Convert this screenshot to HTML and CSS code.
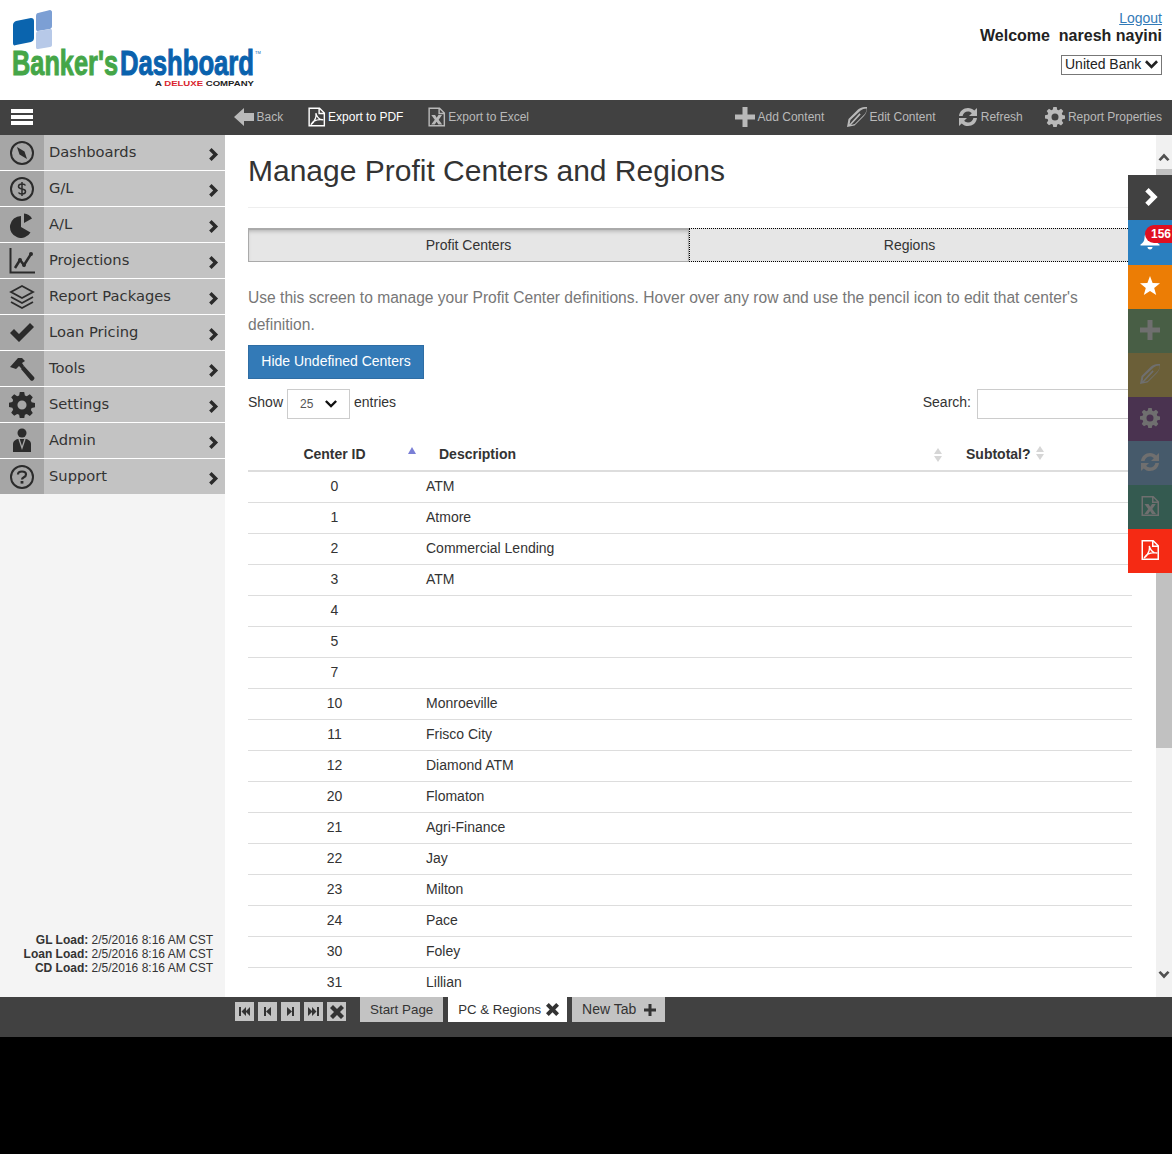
FILE: index.html
```html
<!DOCTYPE html>
<html lang="en">
<head>
    <meta charset="UTF-8">
    <meta name="viewport" content="width=device-width, initial-scale=1.0">
    <title>Manage Profit Centers and Regions</title>
    <link rel="stylesheet" href="styles.css">
</head>
<body>
    <svg class="icon-defs" width="0" height="0">
        <symbol id="i-plus" viewBox="0 0 20 20"><path d="M7.500 0h5v7.500H20v5h-7.500V20h-5v-7.500H0v-5h7.500z"/></symbol>
        <symbol id="i-pencil" viewBox="0 0 20 20"><path fill-rule="evenodd" d="M0 20l1.500-8L11 2.500C13.500.5 16.500-.2 20 0c.3 3.500-.7 6.500-3 9L7.500 18.500zM3.400 13l-.8 4.200 1.100-1.100 8.800-9.800 1.200 1.200-8.800 9.600-.8 1 3.700-1 9.800-9.800c1.300-1.600 2-3.300 2.100-5.800-2.500 0-4.500.8-6.100 2z"/></symbol>
        <symbol id="i-gear" viewBox="0 0 20 20"><path fill-rule="evenodd" d="M8.300 0h3.400l.5 2.700 1.500.6 2.300-1.500 2.300 2.300-1.500 2.300.6 1.500 2.700.5v3.400l-2.700.5-.6 1.500 1.500 2.300-2.300 2.300-2.300-1.500-1.500.6-.5 2.700H8.300l-.5-2.700-1.500-.6L4 18.200 1.700 15.900l1.500-2.300-.6-1.500-2.700-.5V8.200l2.700-.5.6-1.500L1.700 4 4 1.700l2.300 1.500 1.500-.6zM10 6.500a3.500 3.500 0 1 0 0 7 3.500 3.500 0 0 0 0-7z"/></symbol>
        <symbol id="i-refresh" viewBox="0 0 20 20"><path d="M1 9C1.500 4 5.500 1 10 1c2.500 0 4.700 1 6.300 2.600L19 1v8h-8l2.800-2.800C12.800 5.200 11.500 4.500 10 4.500c-2.800 0-4.900 1.900-5.400 4.500z"/><path transform="rotate(180 10 10)" d="M1 9C1.500 4 5.500 1 10 1c2.500 0 4.700 1 6.300 2.600L19 1v8h-8l2.800-2.800C12.800 5.200 11.500 4.500 10 4.500c-2.800 0-4.900 1.900-5.400 4.500z"/></symbol>
        <symbol id="i-excel" viewBox="0 0 20 20"><path fill-rule="evenodd" d="M1.500 0h12L19 5.500V20H1.500zM3 1.500v17h14.500V7H12V1.500zM13.500 2v3.500H17zM4.500 8h4l1.700 2.800L12 8h3.800l-3.500 5 3.700 5h-4l-1.900-3-1.900 3H4.400l3.800-5z"/></symbol>
        <symbol id="i-pdf" viewBox="0 0 20 20"><path fill-rule="evenodd" d="M1.500 0h12L19 5.500V20H1.500zM3 1.500v17h14.500V7H12V1.500zM13.500 2v3.500H17z"/><path d="M4 18c2.500-1.500 4-4 5-7 .6-1.800.6-3.300.3-5 .8 2.800 2.800 5.800 5 6.600l3 .4c-3.200-.6-7.300 0-10 1.300C6 15 5 16.800 4 18z" fill="none" stroke="currentColor" stroke-width="1.300"/></symbol>
        <symbol id="i-chevron" viewBox="0 0 12 16"><path d="M3 0l8 8-8 8-3-3 5-5-5-5z"/></symbol>
        <symbol id="i-down" viewBox="0 0 14 9"><path d="M0 2l2-2 5 5 5-5 2 2-7 7z"/></symbol>
        <symbol id="i-close" viewBox="0 0 14 14"><path d="M3 0l4 4 4-4 3 3-4 4 4 4-3 3-4-4-4 4-3-3 4-4-4-4z"/></symbol>
    </svg>

    <header class="top-header">
        <svg class="logo" width="262" height="90" viewBox="0 0 262 90">
            <path d="M13 25c0-2 1-3 3-4l15-3c2 0 3 1 3 3v17c0 2-1 3-3 4l-15 3c-2 1-3 0-3-2z" fill="#0a64ae"/>
            <path d="M36 16c0-2 1-3 2-3l12-3c1 0 2 1 2 2v14c0 2-1 2-2 3l-12 2c-1 0-2 0-2-2z" fill="#7c9fd4"/>
            <path d="M36 34c0-2 1-3 2-3l12-2c1 0 2 0 2 2v14c0 1-1 2-2 2l-12 2c-1 0-2 0-2-2z" fill="#b7c9e8"/>
            <text class="logo-word logo-green" x="12" y="75" textLength="106" lengthAdjust="spacingAndGlyphs">Banker's</text>
            <text class="logo-word logo-blue" x="120" y="75" textLength="134" lengthAdjust="spacingAndGlyphs">Dashboard</text>
            <text class="logo-tm" x="255" y="54">TM</text>
            <text class="logo-sub" x="155" y="86" textLength="99" lengthAdjust="spacingAndGlyphs">A <tspan class="logo-deluxe">DELUXE</tspan> COMPANY</text>
        </svg>
        <div class="user-box">
            <a href="#" class="logout">Logout</a>
            <div class="welcome">Welcome&nbsp; naresh nayini</div>
            <div class="bank-select">United Bank <svg width="13" height="9"><use href="#i-down"/></svg></div>
        </div>
    </header>

    <nav class="toolbar">
        <div class="hamburger"><span></span><span></span><span></span></div>
        <div class="tool-group">
            <a class="tool"><svg width="20" height="18" viewBox="0 0 20 18"><path d="M0 9l10-9v5h10v8H10v5z"/></svg>Back</a>
            <a class="tool tool-active"><svg width="19" height="20"><use href="#i-pdf"/></svg>Export to PDF</a>
            <a class="tool"><svg width="19" height="20"><use href="#i-excel"/></svg>Export to Excel</a>
        </div>
        <div class="tool-group tool-group-right">
            <a class="tool"><svg width="20" height="20"><use href="#i-plus"/></svg>Add Content</a>
            <a class="tool"><svg width="20" height="20"><use href="#i-pencil"/></svg>Edit Content</a>
            <a class="tool"><svg width="20" height="20"><use href="#i-refresh"/></svg>Refresh</a>
            <a class="tool"><svg width="20" height="20"><use href="#i-gear"/></svg>Report Properties</a>
        </div>
    </nav>

    <div class="app-body">
        <aside class="sidebar">
            <ul class="side-menu">
                <li><span class="side-icon"><svg width="26" height="26" viewBox="0 0 26 26"><circle cx="13" cy="13" r="11" fill="none" stroke="currentColor" stroke-width="2"/><path d="M8 7l7.500 4.500L18 19l-7.500-4.500z"/></svg></span>Dashboards<svg class="side-arrow" width="10" height="13"><use href="#i-chevron"/></svg></li>
                <li><span class="side-icon"><svg width="26" height="26" viewBox="0 0 26 26"><circle cx="13" cy="13" r="11" fill="none" stroke="currentColor" stroke-width="2"/><path d="M16.500 9.500c-.5-1-1.500-1.500-3.500-1.500s-3.500.8-3.500 2.500 1.500 2.200 3.500 2.500 3.500.8 3.500 2.500S15 18 13 18s-3-.5-3.500-1.500M13 6v14" fill="none" stroke="currentColor" stroke-width="1.500"/></svg></span>G/L<svg class="side-arrow" width="10" height="13"><use href="#i-chevron"/></svg></li>
                <li><span class="side-icon"><svg width="26" height="26" viewBox="0 0 26 26"><path d="M12 4v11l9.500 5.500A11 11 0 1 1 12 4z"/><path d="M15 1.500V11l8-4.500A10 10 0 0 0 15 1.500z"/></svg></span>A/L<svg class="side-arrow" width="10" height="13"><use href="#i-chevron"/></svg></li>
                <li><span class="side-icon"><svg width="26" height="26" viewBox="0 0 26 26"><path d="M1.500 0v24.500H26" fill="none" stroke="currentColor" stroke-width="2"/><path d="M6 20l5-8 4 5 7-11" fill="none" stroke="currentColor" stroke-width="2.500"/><circle cx="11" cy="12" r="2"/><circle cx="15" cy="17" r="2"/><circle cx="22" cy="6" r="2"/></svg></span>Projections<svg class="side-arrow" width="10" height="13"><use href="#i-chevron"/></svg></li>
                <li><span class="side-icon"><svg width="26" height="26" viewBox="0 0 26 26"><path d="M13 2l11 6-11 6L2 8z" fill="none" stroke="currentColor" stroke-width="1.800"/><path d="M2 13l11 6 11-6M2 18l11 6 11-6" fill="none" stroke="currentColor" stroke-width="1.800"/></svg></span>Report Packages<svg class="side-arrow" width="10" height="13"><use href="#i-chevron"/></svg></li>
                <li><span class="side-icon"><svg width="26" height="26" viewBox="0 0 26 26"><path d="M1 13l4-4 5 5L21 3l4 4-15 15z"/></svg></span>Loan Pricing<svg class="side-arrow" width="10" height="13"><use href="#i-chevron"/></svg></li>
                <li><span class="side-icon"><svg width="26" height="26" viewBox="0 0 26 26"><path d="M1 11L9 2h4l3 3-3 2 2 3-2 3-3-3-3 3z"/><path d="M12 13l3-3 10 11c.8 1 .5 2-.3 2.700l-.7.7c-.8.600-1.800.500-2.500-.2z"/></svg></span>Tools<svg class="side-arrow" width="10" height="13"><use href="#i-chevron"/></svg></li>
                <li><span class="side-icon"><svg width="26" height="26"><use href="#i-gear"/></svg></span>Settings<svg class="side-arrow" width="10" height="13"><use href="#i-chevron"/></svg></li>
                <li><span class="side-icon"><svg width="26" height="26" viewBox="0 0 26 26"><circle cx="13" cy="5" r="4.500"/><path d="M4 24v-8c0-3 3-5 6-5h6c3 0 6 2 6 5v8z"/><path class="admin-tie" d="M10 11l3 9 3-9"/></svg></span>Admin<svg class="side-arrow" width="10" height="13"><use href="#i-chevron"/></svg></li>
                <li><span class="side-icon"><svg width="26" height="26" viewBox="0 0 26 26"><circle cx="13" cy="13" r="11" fill="none" stroke="currentColor" stroke-width="2"/><path d="M9 10.500c0-2 2-3 4-3s4 1 4 3c0 3-4 2.500-4 5" fill="none" stroke="currentColor" stroke-width="2.200"/><rect x="11.600" y="17" width="2.800" height="2.600"/></svg></span>Support<svg class="side-arrow" width="10" height="13"><use href="#i-chevron"/></svg></li>
            </ul>
            <div class="load-info">
                <div><b>GL Load:</b> 2/5/2016 8:16 AM CST</div>
                <div><b>Loan Load:</b> 2/5/2016 8:16 AM CST</div>
                <div><b>CD Load:</b> 2/5/2016 8:16 AM CST</div>
            </div>
        </aside>

        <main class="content">
            <h1>Manage Profit Centers and Regions</h1>
            <div class="tabs">
                <div class="tab tab-current">Profit Centers</div>
                <div class="tab tab-focus">Regions</div>
            </div>
            <p class="intro">Use this screen to manage your Profit Center definitions. Hover over any row and use the pencil icon to edit that center's definition.</p>
            <button class="btn-primary">Hide Undefined Centers</button>
            <div class="table-controls">
                <div class="length-box">Show <span class="length-select">25 <svg width="12" height="8"><use href="#i-down"/></svg></span> entries</div>
                <div class="search-box">Search: <span class="search-input"></span></div>
            </div>
            <table class="centers">
                <thead>
                    <tr>
                        <th class="col-id">Center ID<span class="sort sort-up"></span></th>
                        <th class="col-desc">Description<span class="sort sort-both"></span></th>
                        <th class="col-sub"><span class="sub-label">Subtotal?<span class="sort sort-both"></span></span></th>
                    </tr>
                </thead>
                <tbody>
                    <tr><td class="col-id">0</td><td>ATM</td><td></td></tr>
                    <tr><td class="col-id">1</td><td>Atmore</td><td></td></tr>
                    <tr><td class="col-id">2</td><td>Commercial Lending</td><td></td></tr>
                    <tr><td class="col-id">3</td><td>ATM</td><td></td></tr>
                    <tr><td class="col-id">4</td><td></td><td></td></tr>
                    <tr><td class="col-id">5</td><td></td><td></td></tr>
                    <tr><td class="col-id">7</td><td></td><td></td></tr>
                    <tr><td class="col-id">10</td><td>Monroeville</td><td></td></tr>
                    <tr><td class="col-id">11</td><td>Frisco City</td><td></td></tr>
                    <tr><td class="col-id">12</td><td>Diamond ATM</td><td></td></tr>
                    <tr><td class="col-id">20</td><td>Flomaton</td><td></td></tr>
                    <tr><td class="col-id">21</td><td>Agri-Finance</td><td></td></tr>
                    <tr><td class="col-id">22</td><td>Jay</td><td></td></tr>
                    <tr><td class="col-id">23</td><td>Milton</td><td></td></tr>
                    <tr><td class="col-id">24</td><td>Pace</td><td></td></tr>
                    <tr><td class="col-id">30</td><td>Foley</td><td></td></tr>
                    <tr><td class="col-id">31</td><td>Lillian</td><td></td></tr>
                </tbody>
            </table>
        </main>

        <div class="scrollbar">
            <svg class="scroll-btn" width="16" height="34" viewBox="0 0 16 34"><path d="M2.500 24.500L8 18.500l5.500 6-2 1.500L8 22.500 4.500 26z"/></svg>
            <div class="scroll-thumb"></div>
            <svg class="scroll-btn scroll-btn-down" width="16" height="34" viewBox="0 0 16 34"><path d="M2.500 9.500L8 15.500l5.500-6-2-1.500L8 11.500 4.500 8z"/></svg>
        </div>

        <div class="quick-panel">
            <div class="quick quick-toggle"><svg width="14" height="18"><use href="#i-chevron"/></svg></div>
            <div class="quick quick-bell">
                <svg width="20" height="20" viewBox="0 0 20 20"><path d="M10 2c3.500 0 5.500 2.500 5.500 6 0 3 1.500 5 4 6.500v1H.5v-1c2.500-1.500 4-3.500 4-6.500 0-3.500 2-6 5.500-6z"/><path d="M7.500 17h5c0 1.500-1 2.500-2.500 2.500S7.500 18.500 7.500 17z"/></svg>
                <span class="bell-badge">156</span>
            </div>
            <div class="quick quick-star"><svg width="20" height="20" viewBox="0 0 20 20"><path d="M10 0l2.600 7 7.400.3-5.800 4.600 2 7.100-6.200-4-6.200 4 2-7.100L0 7.300 7.400 7z"/></svg></div>
            <div class="quick quick-add"><svg width="20" height="20"><use href="#i-plus"/></svg></div>
            <div class="quick quick-edit"><svg width="20" height="20"><use href="#i-pencil"/></svg></div>
            <div class="quick quick-gear"><svg width="20" height="20"><use href="#i-gear"/></svg></div>
            <div class="quick quick-refresh"><svg width="20" height="20"><use href="#i-refresh"/></svg></div>
            <div class="quick quick-excel"><svg width="20" height="20"><use href="#i-excel"/></svg></div>
            <div class="quick quick-pdf"><svg width="20" height="20"><use href="#i-pdf"/></svg></div>
        </div>
    </div>

    <footer class="tab-bar">
        <div class="pager">
            <span class="pager-btn"><svg width="11" height="9" viewBox="0 0 11 9"><path d="M0 0h2v9H0zM7 0v9L2.500 4.500zM11 0v9L6.500 4.500z"/></svg></span>
            <span class="pager-btn"><svg width="7" height="9" viewBox="0 0 7 9"><path d="M0 0h2v9H0zM7 0v9L2 4.500z"/></svg></span>
            <span class="pager-btn"><svg width="7" height="9" viewBox="0 0 7 9"><path d="M7 0H5v9h2zM0 0v9l5-4.500z"/></svg></span>
            <span class="pager-btn"><svg width="11" height="9" viewBox="0 0 11 9"><path d="M11 0H9v9h2zM4 0v9l4.500-4.500zM0 0v9l4.500-4.500z"/></svg></span>
            <span class="pager-btn"><svg width="14" height="14"><use href="#i-close"/></svg></span>
        </div>
        <div class="page-tab">Start Page</div>
        <div class="page-tab page-tab-current">PC &amp; Regions <svg width="13" height="13"><use href="#i-close"/></svg></div>
        <div class="page-tab page-tab-new">New Tab <svg width="12" height="12"><use href="#i-plus"/></svg></div>
    </footer>
    <div class="page-end"></div>
</body>
</html>
```

FILE: styles.css
```css
* {
    box-sizing: border-box;
}

body {
    font-family: 'Liberation Sans', Arial, sans-serif;
    font-size: 14px;
    color: #333;
    margin: 0;
    padding: 0;
    background-color: #000;
    height: 1154px;
    overflow: hidden;
    display: flex;
    flex-direction: column;
}

svg {
    fill: currentColor;
    flex-shrink: 0;
}

.icon-defs {
    position: absolute;
}

/* header */
.top-header {
    height: 100px;
    background-color: #fff;
    display: flex;
    justify-content: space-between;
    flex-shrink: 0;
}

.logo {
    overflow: visible;
}

.logo-word {
    font-size: 35px;
    font-weight: 700;
    stroke-width: 1px;
}

.logo-green {
    fill: #45a648;
    stroke: #45a648;
}

.logo-blue {
    fill: #0a62ad;
    stroke: #0a62ad;
}

.logo-tm {
    font-size: 4px;
    fill: #0a62ad;
}

.logo-sub {
    font-size: 8px;
    font-weight: 700;
    fill: #222;
}

.logo-deluxe {
    fill: #d9232e;
}

.user-box {
    padding: 10px 10px 0 0;
    display: flex;
    flex-direction: column;
    align-items: flex-end;
}

.logout {
    color: #337ab7;
    text-decoration: underline;
    font-size: 14px;
    line-height: 16px;
}

.welcome {
    font-size: 16px;
    font-weight: 700;
    line-height: 18px;
    margin-top: 1px;
    color: #222;
}

.bank-select {
    width: 101px;
    height: 20px;
    margin-top: 10px;
    border: 1px solid #777;
    padding: 0 3px 1px 3px;
    font-size: 14px;
    line-height: 17px;
    display: flex;
    justify-content: space-between;
    align-items: center;
    color: #222;
}

/* toolbar */
.toolbar {
    height: 35px;
    background-color: #414141;
    display: flex;
    align-items: center;
    flex-shrink: 0;
    padding: 0 10px 1px 0;
}

.hamburger {
    width: 234px;
    padding-left: 11px;
    display: flex;
    flex-direction: column;
    gap: 2px;
    flex-shrink: 0;
}

.hamburger span {
    display: block;
    width: 22px;
    height: 4px;
    background-color: #fff;
}

.tool-group {
    display: flex;
    gap: 23.4px;
}

.tool-group-right {
    margin-left: auto;
    gap: 22.7px;
}

.tool {
    display: flex;
    align-items: center;
    gap: 2.5px;
    font-size: 12px;
    color: #b9b9b9;
}

.tool-active {
    color: #fff;
}

/* body */
.app-body {
    height: 862px;
    display: flex;
    position: relative;
    flex-shrink: 0;
    background-color: #fff;
}

.sidebar {
    width: 225px;
    background-color: #f4f4f4;
    display: flex;
    flex-direction: column;
    flex-shrink: 0;
    padding-bottom: 22px;
}

.side-menu {
    list-style: none;
    margin: 0;
    padding: 0;
}

.side-menu li {
    height: 36px;
    border-bottom: 1px solid #fff;
    background-color: #c3c3c3;
    display: flex;
    align-items: flex-start;
    font-family: 'DejaVu Sans', Verdana, sans-serif;
    font-size: 14.7px;
    line-height: 33px;
    color: #333;
}

.side-menu li:last-child {
    height: 35px;
    border-bottom: none;
}

.side-icon {
    width: 44px;
    height: 100%;
    background-color: #a6a6a6;
    margin-right: 5px;
    display: flex;
    align-items: center;
    justify-content: center;
    color: #2b2b2b;
}

.admin-tie {
    fill: none;
    stroke: #a6a6a6;
    stroke-width: 1.3;
}

.side-arrow {
    align-self: center;
    margin: 3px 6px 0 auto;
    color: #2b2b2b;
}

.load-info {
    margin-top: auto;
    text-align: right;
    padding-right: 12px;
    font-size: 12px;
    line-height: 14px;
}

/* main content */
.content {
    flex: 1;
    min-width: 0;
    padding: 0 24px 0 23px;
    overflow: hidden;
}

h1 {
    font-size: 30px;
    font-weight: 400;
    line-height: 36px;
    margin: 0 0 20px;
    padding: 18px 0 18px;
    border-bottom: 1px solid #eee;
    color: #333;
}

.tabs {
    display: flex;
    width: 882px;
}

.tab {
    width: 50%;
    height: 34px;
    line-height: 34px;
    text-align: center;
    background-color: #e6e6e6;
    font-size: 14px;
}

.tab-current {
    border: 1px solid #aaa;
    border-top-width: 2px;
    line-height: 31px;
    box-shadow: inset 0 3px 4px -2px rgba(0, 0, 0, 0.25);
}

.tab-focus {
    border: 1px dotted #000;
    line-height: 32px;
}

.intro {
    font-size: 15.6px;
    line-height: 27px;
    color: #777;
    margin: 22px 0 7px;
}

.btn-primary {
    display: block;
    height: 34px;
    padding: 0 12px 2px;
    width: 176px;
    background-color: #337ab7;
    color: #fff;
    border: 1px solid #2e6da4;
    font-family: inherit;
    font-size: 14px;
}

.table-controls {
    display: flex;
    justify-content: space-between;
    margin-top: 10px;
    height: 30px;
}

.length-box,
.search-box {
    display: flex;
    align-items: center;
    gap: 4px;
    height: 26px;
}

.search-box {
    gap: 6px;
}

.length-select {
    width: 63px;
    height: 30px;
    border: 1px solid #ccc;
    padding: 0 12px;
    font-size: 12px;
    color: #555;
    display: flex;
    align-items: center;
    justify-content: space-between;
    margin-top: 4px;
}

.length-select svg {
    color: #111;
}

.search-input {
    width: 155px;
    height: 30px;
    border: 1px solid #ccc;
    margin-top: 4px;
}

.centers {
    width: 100%;
    border-collapse: separate;
    border-spacing: 0;
    table-layout: fixed;
    margin-top: 19px;
}

.centers th {
    height: 34px;
    border-bottom: 2px solid #ddd;
    font-size: 14px;
    text-align: left;
    position: relative;
    padding: 0 0 0 18px;
}

.centers td {
    height: 31px;
    border-bottom: 1px solid #ddd;
    padding: 0 5px 2px;
    font-size: 14px;
}

.centers .col-id {
    width: 173px;
    text-align: center;
    padding: 0 0 2px;
}

.centers th.col-id {
    padding: 0;
}

.centers .col-desc {
    width: 527px;
}

.sub-label {
    position: relative;
}

.sort {
    position: absolute;
    width: 8px;
}

.sort-up {
    right: 5px;
    top: 9px;
    border-left: 4px solid transparent;
    border-right: 4px solid transparent;
    border-bottom: 7px solid #7a7fd6;
}

.sort-both {
    right: 6px;
    top: 10px;
    height: 14px;
}

.sort-both::before,
.sort-both::after {
    content: "";
    position: absolute;
    left: 0;
    border-left: 4px solid transparent;
    border-right: 4px solid transparent;
}

.sort-both::before {
    top: 0;
    border-bottom: 6px solid #d6d6d6;
}

.sort-both::after {
    bottom: 0;
    border-top: 6px solid #d6d6d6;
}

.sub-label .sort-both {
    right: -13px;
    top: 0;
}

/* scrollbar */
.scrollbar {
    width: 16px;
    background-color: #f1f1f1;
    display: flex;
    flex-direction: column;
    flex-shrink: 0;
    height: 862px;
}

.scroll-btn {
    color: #505050;
}

.scroll-thumb {
    height: 579px;
    background-color: #c1c1c1;
}

.scroll-btn-down {
    margin-top: auto;
}

/* floating quick panel */
.quick-panel {
    position: absolute;
    top: 40px;
    right: 0;
    width: 44px;
}

.quick {
    height: 44px;
    padding-bottom: 3px;
    display: flex;
    align-items: center;
    justify-content: center;
    color: #6f6f6f;
    position: relative;
}

.quick-toggle {
    height: 45px;
    padding: 0 0 1px 3px;
    background-color: #414141;
    color: #fff;
}

.quick-bell {
    height: 45px;
    padding-bottom: 5px;
    background-color: #2a7fbf;
    color: #fff;
}

.quick-star {
    background-color: #ec7d05;
    color: #fff;
}

.quick-add {
    background-color: #485e45;
}

.quick-edit {
    background-color: #6b5f38;
}

.quick-gear {
    background-color: #4a3350;
}

.quick-refresh {
    background-color: #465a6b;
}

.quick-excel {
    background-color: #345a50;
}

.quick-pdf {
    background-color: #f52a14;
    color: #fff;
}

.bell-badge {
    position: absolute;
    top: 5px;
    left: 17px;
    width: 27px;
    height: 18px;
    line-height: 18px;
    padding-left: 6px;
    background-color: #e01020;
    border-radius: 9px 0 0 9px;
    color: #fff;
    font-size: 12px;
    font-weight: 700;
}

/* bottom tab bar */
.tab-bar {
    height: 40px;
    background-color: #414141;
    display: flex;
    align-items: flex-start;
    flex-shrink: 0;
    padding-left: 235px;
    gap: 5px;
}

.pager {
    display: flex;
    gap: 4px;
    padding-top: 5px;
    margin-right: 9px;
}

.pager-btn {
    width: 19px;
    height: 19px;
    background-color: #c3c3c3;
    color: #333;
    display: flex;
    align-items: center;
    justify-content: center;
}

.page-tab {
    height: 25px;
    background-color: #c3c3c3;
    padding: 0 10px;
    font-size: 13.4px;
    line-height: 25px;
    display: flex;
    align-items: center;
    gap: 5px;
}

.page-tab-current {
    background-color: #fff;
    font-size: 13.2px;
    padding-right: 8px;
}

.page-tab-new {
    font-size: 14px;
    padding-right: 9px;
    gap: 8px;
}

.page-end {
    flex: 1;
    background-color: #000;
}
```
